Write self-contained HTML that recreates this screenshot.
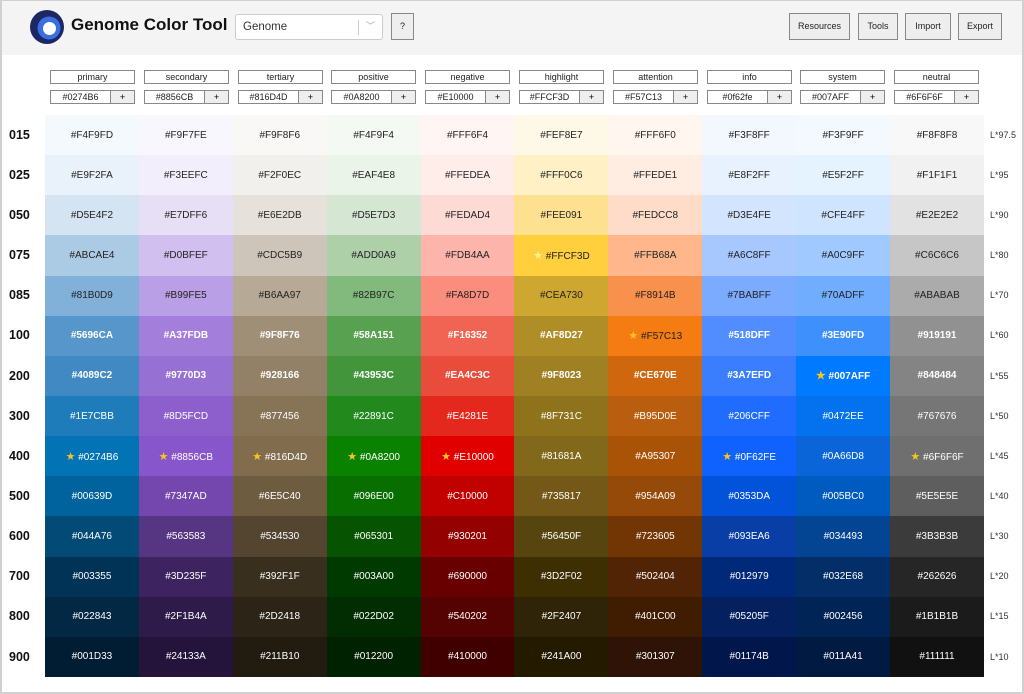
<!DOCTYPE html>
<html><head><meta charset="utf-8"><style>
*{box-sizing:border-box;margin:0;padding:0}
body{width:1024px;height:694px;background:#fff;font-family:"Liberation Sans",Arial,sans-serif;position:relative;overflow:hidden}
.frame{position:absolute;inset:0;border:2px solid #d0d0d0;border-top:1px solid #d0d0d0;pointer-events:none}
.hdr{position:absolute;left:0;top:0;width:1024px;height:55px;background:#f4f4f4}
.title{position:absolute;left:71px;top:15px;font-size:17px;font-weight:bold;color:#111}
.sel{position:absolute;left:235px;top:14px;width:148px;height:26px;background:#fff;border:1px solid #ccc;border-radius:3px;font-size:11.5px;color:#333;padding:6px 7px}
.sel .sep{position:absolute;left:122px;top:5px;width:1px;height:15px;background:#ccc}
.sel .ar{position:absolute;left:130px;top:4px;font-size:9px;color:#aaa}
.btn{position:absolute;top:13px;height:27px;background:#eee;border:1px solid #888;font-size:9px;color:#222;text-align:center;line-height:25px}
.lab{position:absolute;top:70px;width:85px;height:14px;border:1px solid #888;font-size:9px;text-align:center;line-height:12px;color:#222;background:#fff}
.hex{position:absolute;top:90px;width:61px;height:14px;border:1px solid #888;font-size:9px;text-align:center;line-height:12px;color:#222;background:#fff}
.plus{position:absolute;top:90px;width:25px;height:14px;border:1px solid #888;font-size:9px;text-align:center;line-height:12px;background:#eee}
table{position:absolute;left:45px;top:115px;border-collapse:collapse;table-layout:fixed;width:939px}
td{width:93.9px;height:40.15px;text-align:center;font-size:10px;padding:0}
tr.d td{color:#222}
tr.b td{color:#fff;font-weight:bold}
tr.w td{color:#fff}
.rl{position:absolute;left:9px;font-size:12.5px;font-weight:bold;color:#111}
.ll{position:absolute;left:990px;font-size:9px;color:#333}
.s{color:#f7c520;font-size:11px}
</style></head><body>
<div class="hdr"></div>
<svg style="position:absolute;left:29px;top:9px" width="36" height="36"><circle cx="18" cy="18" r="17" fill="#1c2766"/><circle cx="20" cy="19" r="11.5" fill="#3b6fe0"/><circle cx="20.5" cy="19.5" r="6.5" fill="#fff"/></svg>
<div class="title">Genome Color Tool</div>
<div class="sel">Genome<div class="sep"></div><div class="ar">﹀</div></div>
<div class="btn" style="left:391px;width:23px">?</div>
<div class="btn" style="left:789px;width:61px">Resources</div>
<div class="btn" style="left:858px;width:40px">Tools</div>
<div class="btn" style="left:905px;width:46px">Import</div>
<div class="btn" style="left:958px;width:44px">Export</div>

<div class="lab" style="left:50px">primary</div><div class="hex" style="left:50px">#0274B6</div><div class="plus" style="left:110px">+</div>
<div class="lab" style="left:144px">secondary</div><div class="hex" style="left:144px">#8856CB</div><div class="plus" style="left:204px">+</div>
<div class="lab" style="left:238px">tertiary</div><div class="hex" style="left:238px">#816D4D</div><div class="plus" style="left:298px">+</div>
<div class="lab" style="left:331px">positive</div><div class="hex" style="left:331px">#0A8200</div><div class="plus" style="left:391px">+</div>
<div class="lab" style="left:425px">negative</div><div class="hex" style="left:425px">#E10000</div><div class="plus" style="left:485px">+</div>
<div class="lab" style="left:519px">highlight</div><div class="hex" style="left:519px">#FFCF3D</div><div class="plus" style="left:579px">+</div>
<div class="lab" style="left:613px">attention</div><div class="hex" style="left:613px">#F57C13</div><div class="plus" style="left:673px">+</div>
<div class="lab" style="left:707px">info</div><div class="hex" style="left:707px">#0f62fe</div><div class="plus" style="left:767px">+</div>
<div class="lab" style="left:800px">system</div><div class="hex" style="left:800px">#007AFF</div><div class="plus" style="left:860px">+</div>
<div class="lab" style="left:894px">neutral</div><div class="hex" style="left:894px">#6F6F6F</div><div class="plus" style="left:954px">+</div>

<div class="rl" style="top:128px">015</div><div class="rl" style="top:168px">025</div><div class="rl" style="top:208px">050</div><div class="rl" style="top:248px">075</div><div class="rl" style="top:288px">085</div><div class="rl" style="top:328px">100</div><div class="rl" style="top:369px">200</div><div class="rl" style="top:409px">300</div><div class="rl" style="top:449px">400</div><div class="rl" style="top:489px">500</div><div class="rl" style="top:529px">600</div><div class="rl" style="top:569px">700</div><div class="rl" style="top:609px">800</div><div class="rl" style="top:650px">900</div>
<div class="ll" style="top:130px">L*97.5</div><div class="ll" style="top:170px">L*95</div><div class="ll" style="top:210px">L*90</div><div class="ll" style="top:250px">L*80</div><div class="ll" style="top:290px">L*70</div><div class="ll" style="top:330px">L*60</div><div class="ll" style="top:371px">L*55</div><div class="ll" style="top:411px">L*50</div><div class="ll" style="top:451px">L*45</div><div class="ll" style="top:491px">L*40</div><div class="ll" style="top:531px">L*30</div><div class="ll" style="top:571px">L*20</div><div class="ll" style="top:611px">L*15</div><div class="ll" style="top:652px">L*10</div>

<table>
<tr class="d"><td style="background:#F4F9FD">#F4F9FD</td><td style="background:#F9F7FE">#F9F7FE</td><td style="background:#F9F8F6">#F9F8F6</td><td style="background:#F4F9F4">#F4F9F4</td><td style="background:#FFF6F4">#FFF6F4</td><td style="background:#FEF8E7">#FEF8E7</td><td style="background:#FFF6F0">#FFF6F0</td><td style="background:#F3F8FF">#F3F8FF</td><td style="background:#F3F9FF">#F3F9FF</td><td style="background:#F8F8F8">#F8F8F8</td></tr>
<tr class="d"><td style="background:#E9F2FA">#E9F2FA</td><td style="background:#F3EEFC">#F3EEFC</td><td style="background:#F2F0EC">#F2F0EC</td><td style="background:#EAF4E8">#EAF4E8</td><td style="background:#FFEDEA">#FFEDEA</td><td style="background:#FFF0C6">#FFF0C6</td><td style="background:#FFEDE1">#FFEDE1</td><td style="background:#E8F2FF">#E8F2FF</td><td style="background:#E5F2FF">#E5F2FF</td><td style="background:#F1F1F1">#F1F1F1</td></tr>
<tr class="d"><td style="background:#D5E4F2">#D5E4F2</td><td style="background:#E7DFF6">#E7DFF6</td><td style="background:#E6E2DB">#E6E2DB</td><td style="background:#D5E7D3">#D5E7D3</td><td style="background:#FEDAD4">#FEDAD4</td><td style="background:#FEE091">#FEE091</td><td style="background:#FEDCC8">#FEDCC8</td><td style="background:#D3E4FE">#D3E4FE</td><td style="background:#CFE4FF">#CFE4FF</td><td style="background:#E2E2E2">#E2E2E2</td></tr>
<tr class="d"><td style="background:#ABCAE4">#ABCAE4</td><td style="background:#D0BFEF">#D0BFEF</td><td style="background:#CDC5B9">#CDC5B9</td><td style="background:#ADD0A9">#ADD0A9</td><td style="background:#FDB4AA">#FDB4AA</td><td style="background:#FFCF3D"><span class="s" style="color:#fff3a0">★</span> #FFCF3D</td><td style="background:#FFB68A">#FFB68A</td><td style="background:#A6C8FF">#A6C8FF</td><td style="background:#A0C9FF">#A0C9FF</td><td style="background:#C6C6C6">#C6C6C6</td></tr>
<tr class="d"><td style="background:#81B0D9">#81B0D9</td><td style="background:#B99FE5">#B99FE5</td><td style="background:#B6AA97">#B6AA97</td><td style="background:#82B97C">#82B97C</td><td style="background:#FA8D7D">#FA8D7D</td><td style="background:#CEA730">#CEA730</td><td style="background:#F8914B">#F8914B</td><td style="background:#7BABFF">#7BABFF</td><td style="background:#70ADFF">#70ADFF</td><td style="background:#ABABAB">#ABABAB</td></tr>
<tr class="b"><td style="background:#5696CA">#5696CA</td><td style="background:#A37FDB">#A37FDB</td><td style="background:#9F8F76">#9F8F76</td><td style="background:#58A151">#58A151</td><td style="background:#F16352">#F16352</td><td style="background:#AF8D27">#AF8D27</td><td style="background:#F57C13;color:#222;font-weight:normal"><span class="s">★</span> #F57C13</td><td style="background:#518DFF">#518DFF</td><td style="background:#3E90FD">#3E90FD</td><td style="background:#919191">#919191</td></tr>
<tr class="b"><td style="background:#4089C2">#4089C2</td><td style="background:#9770D3">#9770D3</td><td style="background:#928166">#928166</td><td style="background:#43953C">#43953C</td><td style="background:#EA4C3C">#EA4C3C</td><td style="background:#9F8023">#9F8023</td><td style="background:#CE670E">#CE670E</td><td style="background:#3A7EFD">#3A7EFD</td><td style="background:#007AFF"><span class="s">★</span> #007AFF</td><td style="background:#848484">#848484</td></tr>
<tr class="w"><td style="background:#1E7CBB">#1E7CBB</td><td style="background:#8D5FCD">#8D5FCD</td><td style="background:#877456">#877456</td><td style="background:#22891C">#22891C</td><td style="background:#E4281E">#E4281E</td><td style="background:#8F731C">#8F731C</td><td style="background:#B95D0E">#B95D0E</td><td style="background:#206CFF">#206CFF</td><td style="background:#0472EE">#0472EE</td><td style="background:#767676">#767676</td></tr>
<tr class="w"><td style="background:#0274B6"><span class="s">★</span> #0274B6</td><td style="background:#8856CB"><span class="s">★</span> #8856CB</td><td style="background:#816D4D"><span class="s">★</span> #816D4D</td><td style="background:#0A8200"><span class="s">★</span> #0A8200</td><td style="background:#E10000"><span class="s">★</span> #E10000</td><td style="background:#81681A">#81681A</td><td style="background:#A95307">#A95307</td><td style="background:#0F62FE"><span class="s">★</span> #0F62FE</td><td style="background:#0A66D8">#0A66D8</td><td style="background:#6F6F6F"><span class="s">★</span> #6F6F6F</td></tr>
<tr class="w"><td style="background:#00639D">#00639D</td><td style="background:#7347AD">#7347AD</td><td style="background:#6E5C40">#6E5C40</td><td style="background:#096E00">#096E00</td><td style="background:#C10000">#C10000</td><td style="background:#735817">#735817</td><td style="background:#954A09">#954A09</td><td style="background:#0353DA">#0353DA</td><td style="background:#005BC0">#005BC0</td><td style="background:#5E5E5E">#5E5E5E</td></tr>
<tr class="w"><td style="background:#044A76">#044A76</td><td style="background:#563583">#563583</td><td style="background:#534530">#534530</td><td style="background:#065301">#065301</td><td style="background:#930201">#930201</td><td style="background:#56450F">#56450F</td><td style="background:#723605">#723605</td><td style="background:#093EA6">#093EA6</td><td style="background:#034493">#034493</td><td style="background:#3B3B3B">#3B3B3B</td></tr>
<tr class="w"><td style="background:#003355">#003355</td><td style="background:#3D235F">#3D235F</td><td style="background:#392F1F">#392F1F</td><td style="background:#003A00">#003A00</td><td style="background:#690000">#690000</td><td style="background:#3D2F02">#3D2F02</td><td style="background:#502404">#502404</td><td style="background:#012979">#012979</td><td style="background:#032E68">#032E68</td><td style="background:#262626">#262626</td></tr>
<tr class="w"><td style="background:#022843">#022843</td><td style="background:#2F1B4A">#2F1B4A</td><td style="background:#2D2418">#2D2418</td><td style="background:#022D02">#022D02</td><td style="background:#540202">#540202</td><td style="background:#2F2407">#2F2407</td><td style="background:#401C00">#401C00</td><td style="background:#05205F">#05205F</td><td style="background:#002456">#002456</td><td style="background:#1B1B1B">#1B1B1B</td></tr>
<tr class="w"><td style="background:#001D33">#001D33</td><td style="background:#24133A">#24133A</td><td style="background:#211B10">#211B10</td><td style="background:#012200">#012200</td><td style="background:#410000">#410000</td><td style="background:#241A00">#241A00</td><td style="background:#301307">#301307</td><td style="background:#01174B">#01174B</td><td style="background:#011A41">#011A41</td><td style="background:#111111">#111111</td></tr>
</table>
<div class="frame"></div>
</body></html>
